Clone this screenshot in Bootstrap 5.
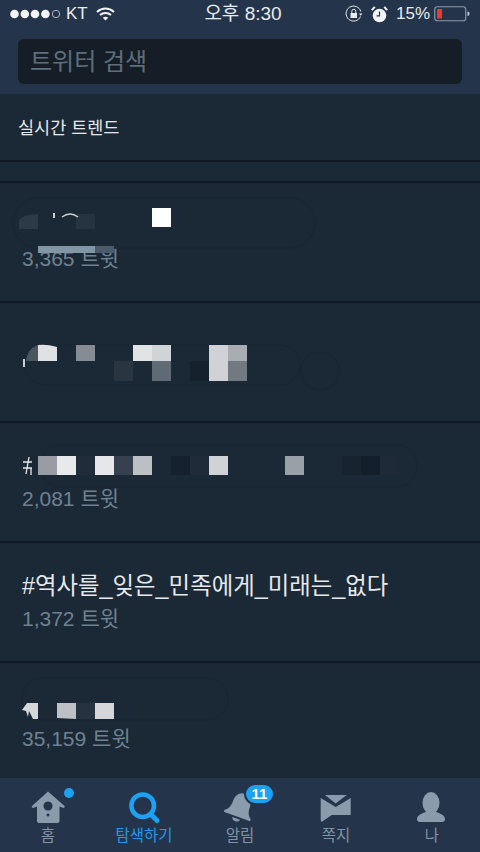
<!DOCTYPE html>
<html lang="ko">

<head>
  <meta charset="UTF-8" />
  <meta name="viewport" content="width=device-width, initial-scale=1" />
  <title>트위터 검색</title>
  <link href="https://cdn.jsdelivr.net/npm/bootstrap@5.3.0/dist/css/bootstrap.min.css" rel="stylesheet">
  <style>
    html,
    body {
      height: 852px;
      overflow: hidden;
    }

    body {
      font-family: "Liberation Sans", "Noto Sans CJK KR", sans-serif;
      background-color: #1b2836;
      color: #e6e9ec;
    }

    .top-head {
      height: 95px;
      background-color: #24344a;
      border-bottom: 1px solid #1d2a3a;
    }

    .status-bar {
      height: 28px;
      padding: 0 10px 0 10px;
      color: #e8ebef;
      font-size: 17px;
    }

    .status-side {
      flex: 1 1 0;
    }

    .status-time {
      font-size: 19px;
      margin-left: 6px;
    }

    .search-wrap {
      padding: 11px 18px 0;
    }

    .search-box {
      height: 45px;
      padding: 0 12px;
      background-color: #151d27;
      border: 0;
      border-radius: 6px;
      font-size: 24px;
      color: #e6e9ec;
    }

    .search-box::placeholder {
      color: #5f6e7b;
      opacity: 1;
    }

    .trend-head {
      height: 67px;
      padding: 20px 18px 0;
      font-size: 17.5px;
      border-bottom: 2px solid #111a24;
    }

    .trend-gap {
      height: 21px;
      border-bottom: 2px solid #111a24;
    }

    .trend-row {
      height: 120px;
      padding: 24px 22px 0;
      border-bottom: 2px solid #111a24;
    }

    .trend-row.last-row {
      height: 115px;
      border-bottom: 0;
    }

    .trend-title {
      height: 38px;
      line-height: 38px;
      font-size: 23.4px;
      color: #e6e9ec;
      white-space: nowrap;
    }

    .trend-count {
      line-height: 28px;
      font-size: 21px;
      color: #6f8291;
    }

    .tab-bar {
      height: 74px;
      background-color: #24344a;
    }

    .tab-item {
      width: 96px;
      padding-top: 12px;
      color: #7f93a3;
      font-size: 15.5px;
      line-height: 20px;
    }

    .tab-item svg {
      display: block;
      width: 40px;
      height: 36px;
    }

    .tab-on {
      color: #1d9bf0;
    }

    .tab-dot {
      top: 10px;
      left: 64px;
      width: 10px;
      height: 10px;
      background-color: #1da1f2;
    }

    .tab-count {
      top: 5px;
      left: 52px;
      width: 31px;
      height: 22px;
      line-height: 18px;
      font-size: 15px;
      font-weight: 700;
      color: #fff;
      background-color: #1da1f2;
      border: 2px solid #24344a;
      border-radius: 11px;
    }
  </style>
</head>

<body>
  <div class="d-flex flex-column">
    <header class="top-head">
      <div class="status-bar d-flex align-items-center">
        <div class="status-side d-flex align-items-center">
          <svg width="52" height="10" viewBox="0 0 52 10" class="me-1">
            <g fill="#f2f4f6">
              <circle cx="4.500" cy="5" r="4.300" />
              <circle cx="14.800" cy="5" r="4.300" />
              <circle cx="25" cy="5" r="4.300" />
              <circle cx="35.400" cy="5" r="4.300" />
            </g>
            <circle cx="46" cy="5" r="3.700" fill="none" stroke="#aeb6be" stroke-width="1" />
          </svg>
          <span>KT</span>
          <svg width="19" height="14" viewBox="0 0 19 14" class="ms-2" fill="none" stroke="#f2f4f6" stroke-width="2">
            <path d="M1 5c5-4.600 12-4.600 17 0" />
            <path d="M4 8c3-2.800 8-2.800 11 0" />
            <path d="M9.500 13.500 6.800 10.700c1.500-1.300 3.900-1.300 5.400 0z" fill="#f2f4f6" stroke="none" />
          </svg>
        </div>
        <div class="status-time">오후 8:30</div>
        <div class="status-side d-flex align-items-center justify-content-end">
          <svg width="18" height="18" viewBox="0 0 18 18" fill="none" stroke="#e8ebef" stroke-width="1">
            <path d="M15.500 11.500A7.500 7.500 0 1 1 15.800 6.500" />
            <path d="M14 8.500h3.500l-1.800 2.200z" fill="#e8ebef" stroke="none" />
            <rect x="5.500" y="8" width="6.500" height="5" fill="#e8ebef" stroke="none" />
            <path d="M6.800 8V6.300a2 2 0 0 1 4 0V8" />
          </svg>
          <svg width="17" height="17" viewBox="0 0 17 17" class="ms-2">
            <circle cx="8.500" cy="9.500" r="6.800" fill="#f2f4f6" />
            <path d="M8.500 5.500v4.300H5.500" fill="none" stroke="#24344a" stroke-width="1.200" />
            <path d="M.8 4.200 3.800.9M16.200 4.200 13.200.9" stroke="#f2f4f6" stroke-width="2" />
          </svg>
          <span class="ms-2">15%</span>
          <svg width="36" height="16" viewBox="0 0 36 16" class="ms-1">
            <rect x=".75" y=".75" width="31" height="14" rx="2.500" fill="none" stroke="#8a98a6" stroke-width="1.200" />
            <rect x="3" y="3" width="5" height="9.500" fill="#f03a2e" />
            <path d="M33.500 5.500c1.300 0 2 1 2 2.200s-.7 2.300-2 2.300z" fill="#c3cbd2" />
          </svg>
        </div>
      </div>
      <div class="search-wrap">
        <input class="form-control search-box shadow-none" type="text" placeholder="트위터 검색">
      </div>
    </header>

    <div class="trend-head">실시간 트렌드</div>
    <div class="trend-gap"></div>

    <div class="trend-row position-relative">
      <div class="trend-title"></div>
      <div class="trend-count">3,365 트윗</div>
      <svg class="position-absolute top-0 start-0" width="480" height="120" viewBox="0 0 480 120">
        <rect x="13" y="15" width="302" height="50" rx="25" fill="none" stroke="#192532" />
        <path d="M19 46V37q5-6 19-6v15z" fill="#2c3a48" />
        <rect x="76" y="31" width="19" height="15" fill="#263442" />
        <path d="M62 34q8-6 16 0" fill="none" stroke="#c9ced3" stroke-width="1.500" />
        <rect x="53" y="30" width="2" height="5" fill="#c9ced3" />
        <rect x="152" y="25" width="19" height="19" fill="#fff" />
        <rect x="38" y="63" width="57" height="7" fill="#8297a5" />
        <rect x="95" y="63" width="19" height="7" fill="#4a5c6b" />
      </svg>
    </div>

    <div class="trend-row position-relative">
      <svg class="position-absolute top-0 start-0" width="480" height="120" viewBox="0 0 480 120">
        <rect x="25" y="42" width="275" height="40" rx="20" fill="none" stroke="#192532" />
        <circle cx="320" cy="68" r="19" fill="none" stroke="#192532" />
        <path d="M26 58q1-12 12-16v16z" fill="#4a5560" />
        <path d="M38 58V42q9-1 19 2v14z" fill="#e0e1e4" />
        <rect x="76" y="42" width="19" height="16" fill="#858c93" />
        <rect x="133" y="42" width="19" height="16" fill="#e2e3e5" />
        <rect x="152" y="42" width="19" height="16" fill="#d1d4d7" />
        <rect x="209" y="42" width="19" height="36" fill="#d0d2d5" />
        <rect x="228" y="42" width="19" height="16" fill="#a9acb3" />
        <rect x="228" y="58" width="19" height="20" fill="#727980" />
        <rect x="114" y="58" width="19" height="20" fill="#2a3542" />
        <rect x="152" y="58" width="19" height="20" fill="#606a74" />
        <rect x="190" y="58" width="19" height="20" fill="#15212c" />
        <rect x="23" y="56" width="2" height="8" fill="#c9ced3" />
      </svg>
    </div>

    <div class="trend-row position-relative">
      <div class="trend-title"></div>
      <div class="trend-count">2,081 트윗</div>
      <svg class="position-absolute top-0 start-0" width="480" height="120" viewBox="0 0 480 120">
        <rect x="40" y="22" width="377" height="42" rx="21" fill="none" stroke="#192532" />
        <path d="M29 34l-3 17M32 39H23M32 45H23M31 45v7" fill="none" stroke="#e6e9ec" stroke-width="1.300" />
        <rect x="38" y="33" width="19" height="19" fill="#999ca5" />
        <rect x="57" y="33" width="19" height="19" fill="#e8e9eb" />
        <rect x="76" y="33" width="19" height="19" fill="#202c3a" />
        <rect x="95" y="33" width="19" height="19" fill="#e5e7ea" />
        <rect x="114" y="33" width="19" height="19" fill="#35414f" />
        <rect x="133" y="33" width="19" height="19" fill="#bcc0c5" />
        <rect x="171" y="33" width="19" height="19" fill="#15212f" />
        <rect x="190" y="33" width="19" height="19" fill="#202b3a" />
        <rect x="209" y="33" width="19" height="19" fill="#cfd3d6" />
        <rect x="285" y="33" width="19" height="19" fill="#9aa0a8" />
        <rect x="342" y="33" width="19" height="19" fill="#18232f" />
        <rect x="361" y="33" width="19" height="19" fill="#13202c" />
        <rect x="380" y="33" width="19" height="19" fill="#1f2a38" />
      </svg>
    </div>

    <div class="trend-row">
      <div class="trend-title">#역사를_잊은_민족에게_미래는_없다</div>
      <div class="trend-count">1,372 트윗</div>
    </div>

    <div class="trend-row last-row position-relative">
      <div class="trend-title"></div>
      <div class="trend-count">35,159 트윗</div>
      <svg class="position-absolute top-0 start-0" width="480" height="115" viewBox="0 0 480 115">
        <rect x="22" y="15" width="206" height="42" rx="21" fill="none" stroke="#192532" />
        <path d="M22 47l5-7h11v16h-5l-4-8-1 6-2-6z" fill="#d5d8db" />
        <path d="M57 40h19v16l-19-1z" fill="#bdc1c5" />
        <rect x="76" y="40" width="19" height="16" fill="#263240" />
        <rect x="95" y="40" width="19" height="16" fill="#d4d6d9" />
      </svg>
    </div>

    <nav class="tab-bar d-flex">
      <div class="tab-item position-relative d-flex flex-column align-items-center">
        <svg viewBox="0 0 40 36">
          <path fill="#8a9cab" fill-rule="evenodd"
            d="M20 1.500 36.500 16q1 1.500-1 2l-4-1.500V31q0 2-2 2H11q-2 0-2-2V16.500L5 18q-2-.5-1-2ZM20 11.500a4.500 4.500 0 1 0 .01 0ZM20 23.500a1.500 1.500 0 1 0 .01 0Z" />
        </svg>
        <span class="tab-dot position-absolute rounded-circle"></span>
        <span>홈</span>
      </div>
      <div class="tab-item tab-on d-flex flex-column align-items-center">
        <svg viewBox="0 0 40 36" fill="none" stroke="#1da1f2">
          <circle cx="18.700" cy="15.700" r="11.300" stroke-width="4.500" />
          <path d="M27 24.500 33 30.500" stroke-width="5" stroke-linecap="round" />
        </svg>
        <span>탐색하기</span>
      </div>
      <div class="tab-item position-relative d-flex flex-column align-items-center">
        <svg viewBox="0 0 40 36">
          <g fill="#8a9cab" transform="rotate(20 20 18)">
            <path d="M20 3c-6 0-9 5-9 11 0 6-2 9-5 11v2h28v-2c-3-2-5-5-5-11 0-6-3-11-9-11z" />
            <path d="M16 29h8c0 4-8 4-8 0z" />
          </g>
        </svg>
        <span class="tab-count position-absolute text-center">11</span>
        <span>알림</span>
      </div>
      <div class="tab-item d-flex flex-column align-items-center">
        <svg viewBox="0 0 40 36" fill="#8a9cab">
          <path d="M9 5h21.700L19.700 13.500z" />
          <path d="M4.700 8 19.700 17 34.700 8V25H15.700L5.500 32 4.700 30z" />
        </svg>
        <span>쪽지</span>
      </div>
      <div class="tab-item d-flex flex-column align-items-center">
        <svg viewBox="0 0 40 36" fill="#8a9cab">
          <ellipse cx="19" cy="13" rx="8.500" ry="11" />
          <path d="M5 29c0-5 8-6 10-8h8c2 2 10 3 10 8q0 3-3 3H8q-3 0-3-3z" />
        </svg>
        <span>나</span>
      </div>
    </nav>
  </div>

  <script src="https://cdn.jsdelivr.net/npm/bootstrap@5.3.0/dist/js/bootstrap.bundle.min.js"></script>
</body>

</html>
